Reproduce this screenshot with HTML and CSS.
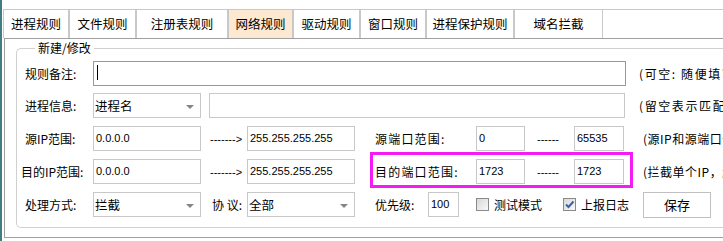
FILE: index.html
```html
<!DOCTYPE html>
<html>
<head>
    <title>网络规则</title>
    <link rel="stylesheet" href="styles.css">
</head>
<body>
    <div class="window">
        <div class="edge"></div>
        <div class="main">
            <div class="tabbar">
                <div class="tab" style="width: 66px">进程规则</div>
                <div class="tab" style="width: 67px">文件规则</div>
                <div class="tab" style="width: 92px">注册表规则</div>
                <div class="tab active" style="width: 65px">网络规则</div>
                <div class="tab" style="width: 67px">驱动规则</div>
                <div class="tab" style="width: 66px">窗口规则</div>
                <div class="tab" style="width: 88px">进程保护规则</div>
                <div class="tab" style="width: 89px">域名拦截</div>
            </div>

            <div class="panel">
                <fieldset class="group">
                    <legend>新建/修改</legend>

                    <div class="row first">
                        <div class="label">规则备注:</div>
                        <div class="input focus long"><span class="caret"></span></div>
                        <div class="hint">(可空: 随便填写, 用于备注)</div>
                    </div>

                    <div class="row second">
                        <div class="label">进程信息:</div>
                        <div class="select"><span>进程名</span><i class="arrow"></i></div>
                        <div class="input proc"></div>
                        <div class="hint">(留空表示匹配所有进程)</div>
                    </div>

                    <div class="row">
                        <div class="label">源IP范围:</div>
                        <div class="input ip">0.0.0.0</div>
                        <div class="arrowtext">-------&gt;</div>
                        <div class="input ip">255.255.255.255</div>
                        <div class="ports">
                            <div class="portlabel">源端口范围:</div>
                            <div class="input port">0</div>
                            <div class="dash">------</div>
                            <div class="input port2">65535</div>
                        </div>
                        <div class="hint wide">(源IP和源端口一般不填)</div>
                    </div>

                    <div class="row">
                        <div class="label tight">目的IP范围:</div>
                        <div class="input ip">0.0.0.0</div>
                        <div class="arrowtext">-------&gt;</div>
                        <div class="input ip">255.255.255.255</div>
                        <div class="ports marked">
                            <div class="portlabel">目的端口范围:</div>
                            <div class="input port">1723</div>
                            <div class="dash">------</div>
                            <div class="input port2">1723</div>
                        </div>
                        <div class="hint wide">(拦截单个IP，起止填一样)</div>
                    </div>

                    <div class="row">
                        <div class="label">处理方式:</div>
                        <div class="select"><span>拦截</span><i class="arrow"></i></div>
                        <div class="protolabel">协 议:</div>
                        <div class="select"><span>全部</span><i class="arrow"></i></div>
                        <div class="prilabel">优先级:</div>
                        <div class="input pri">100</div>
                        <div class="check first-check"><span class="box"></span>测试模式</div>
                        <div class="check second-check">
                            <span class="box">
                                <svg width="11" height="11" viewBox="0 0 11 11"><path d="M2 5.5 L4.5 8 L9.5 2.5" fill="none" stroke="#3b62a8" stroke-width="2"/></svg>
                            </span>上报日志
                        </div>
                        <div class="button">保存</div>
                    </div>
                </fieldset>
            </div>
        </div>
    </div>
</body>
</html>
```

FILE: styles.css
```css
html, body {
    margin: 0;
    padding: 0;
    background: #fff;
    overflow: hidden;
}

body {
    width: 723px;
    height: 241px;
    font-family: "Noto Sans CJK SC", "Liberation Sans", sans-serif;
    font-size: 12px;
    color: #000;
}

.window {
    display: flex;
    height: 241px;
}

.edge {
    width: 2px;
    flex: none;
    background: #3f7f80;
}

.main {
    flex: none;
    width: 900px;
    padding-left: 1px;
}

.tabbar {
    margin-top: 9px;
    height: 28px;
    border-top: 1px solid #c8c8c8;
    display: flex;
}

.tab {
    box-sizing: border-box;
    height: 28px;
    line-height: 27px;
    text-align: center;
    font-size: 12.5px;
    border-left: 1px solid #c8c8c8;
    border-right: 1px solid #c8c8c8;
    background: #fff;
}

.tab.active {
    background: #fde8d2;
}

.panel {
    margin-left: 1px;
    border: 1px solid #a0a0a0;
    border-right: none;
    padding: 1px 0 9px 11px;
}

.group {
    margin: 0;
    padding: 0 0 10px 0;
    border: 1px solid #d0d0d0;
    border-radius: 5px;
    border-right: none;
    min-width: 0;
}

.group legend {
    margin-left: 18px;
    padding: 0 3px;
    line-height: 16px;
    font-size: 12px;
}

.row {
    display: flex;
    align-items: center;
    height: 25px;
    margin-top: 8px;
    white-space: nowrap;
}

.row.first {
    margin-top: 5px;
}

.row.second {
    margin-top: 7px;
}

.label {
    flex: none;
    box-sizing: border-box;
    width: 76px;
    padding-left: 8px;
}

.label.tight {
    padding-left: 4px;
}

.input {
    flex: none;
    box-sizing: border-box;
    height: 25px;
    line-height: 23px;
    border: 1px solid #c8c8c8;
    padding-left: 2px;
    font-family: "Liberation Sans", sans-serif;
    font-size: 11px;
    background: #fff;
}

.input.focus {
    border-color: #5aa6f2;
}

.long {
    width: 533px;
    position: relative;
}

.caret {
    display: inline-block;
    width: 1px;
    height: 15px;
    background: #000;
    margin-left: 1px;
    vertical-align: -3px;
}

.proc {
    width: 416px;
    margin-left: 8px;
}

.ip {
    width: 108px;
}

.select {
    flex: none;
    box-sizing: border-box;
    width: 108px;
    height: 25px;
    border: 1px solid #c8c8c8;
    padding-left: 1px;
    display: flex;
    align-items: center;
    justify-content: space-between;
    font-size: 12.5px;
}

.arrow {
    width: 0;
    height: 0;
    border-left: 4px solid transparent;
    border-right: 4px solid transparent;
    border-top: 4px solid #858585;
    margin-right: 6px;
    margin-top: 2px;
}

.hint {
    flex: none;
    margin-left: 13px;
    letter-spacing: 1.6px;
}

.row.second .hint {
    margin-left: 14px;
}

.hint.wide {
    margin-left: 19px;
    letter-spacing: 0.5px;
}

.arrowtext {
    flex: none;
    box-sizing: border-box;
    width: 46px;
    padding-left: 9px;
    font-family: "Liberation Sans", sans-serif;
    font-size: 11px;
}

.ports {
    flex: none;
    display: flex;
    align-items: center;
    position: relative;
}

.portlabel {
    flex: none;
    box-sizing: border-box;
    width: 121px;
    padding-left: 20px;
    letter-spacing: 1.2px;
}

.port {
    width: 49px;
}

.port2 {
    width: 50px;
}

.dash {
    flex: none;
    box-sizing: border-box;
    width: 49px;
    padding-left: 12px;
    font-family: "Liberation Sans", sans-serif;
    font-size: 11px;
}

/* highlight drawn over the destination port group */
.marked::after {
    content: "";
    position: absolute;
    left: 15px;
    right: -9px;
    top: -7px;
    bottom: -4px;
    border: 3px solid #f41cf2;
}

.protolabel {
    flex: none;
    box-sizing: border-box;
    width: 46px;
    padding-left: 11px;
}

.prilabel {
    flex: none;
    box-sizing: border-box;
    width: 73px;
    padding-left: 20px;
}

.pri {
    width: 31px;
}

.check {
    flex: none;
    display: flex;
    align-items: center;
    font-size: 12px;
}

.first-check {
    margin-left: 17px;
    width: 87px;
}

.second-check {
    width: 80px;
}

.box {
    box-sizing: border-box;
    width: 13px;
    height: 13px;
    margin-right: 5px;
    border: 1px solid #8a8a8a;
    background: linear-gradient(135deg, #d8d8d8, #f8f8f8);
    display: flex;
    align-items: center;
    justify-content: center;
}

.box svg {
    display: block;
}

.button {
    flex: none;
    box-sizing: border-box;
    width: 68px;
    height: 26px;
    line-height: 24px;
    text-align: center;
    border: 1px solid #c0c0c0;
    background: #fff;
    font-size: 13px;
}
```
